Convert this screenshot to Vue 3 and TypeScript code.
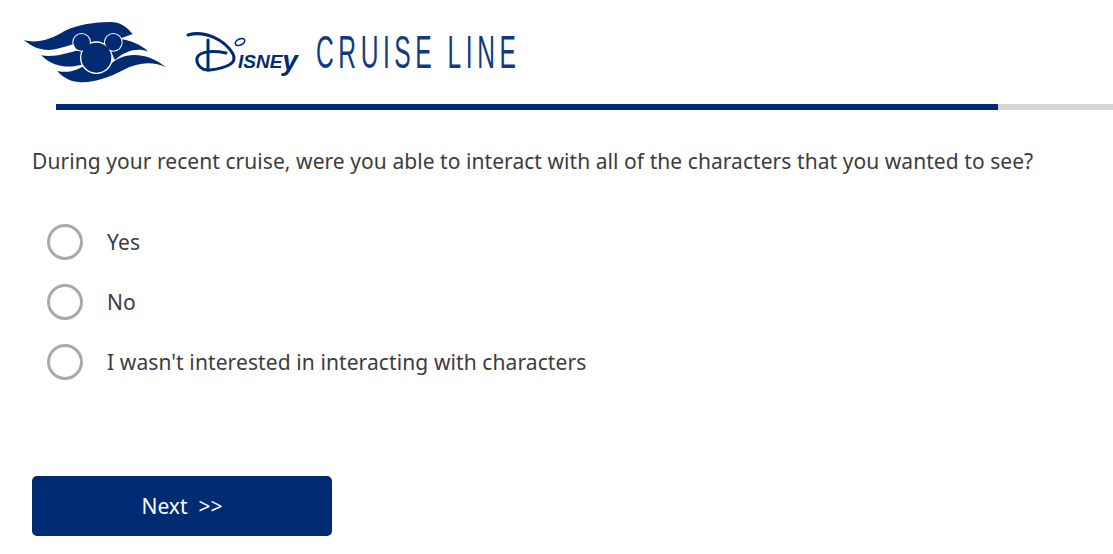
<script setup lang="ts">
const options: string[] = ['Yes', 'No', "I wasn't interested in interacting with characters"]
</script>

<template>
  <div class="page">
    <header class="brand">
      <svg class="flag" viewBox="0 0 540 270" width="180" height="90" role="img" aria-label="Disney Cruise Line flag">
        <path class="ink" d="M42 91 C80 100 120 90 165 62 C205 44 255 36 300 36 C330 36 350 50 368 72 L335 84 L290 100 L200 100 C170 108 140 120 115 120 C85 120 60 106 42 91 Z" />
        <path class="ink" d="M93 136 C130 144 170 130 215 118 L222 162 C190 172 140 180 93 136 Z" />
        <path class="ink" d="M335 88 C362 92 392 104 414 124 C385 114 350 118 315 150 L300 120 Z" />
        <path class="ink" d="M142 183 C175 190 195 182 222 168 L300 165 C325 136 395 112 468 172 C430 153 385 156 340 180 C295 204 245 220 205 216 C175 214 155 198 142 183 Z" />
        <g class="mouse">
          <circle cx="215" cy="97" r="28" />
          <circle cx="310" cy="97" r="28" />
          <circle cx="259" cy="143" r="49" />
        </g>
        <g class="ink">
          <circle cx="215" cy="97" r="25" />
          <circle cx="310" cy="97" r="25" />
          <circle cx="259" cy="143" r="45" />
        </g>
      </svg>
      <svg class="wordmark" viewBox="0 0 350 70" width="350" height="70" role="img" aria-label="Disney Cruise Line">
        <path class="swoosh" d="M8 15 C25 10 45 20 53 34 C58 44 45 48 30 50 C22 51 16 45 17 38 C19 32 30 30 46 33" />
        <path class="swoosh" d="M28 20 L28 50" />
        <ellipse class="dot" cx="60" cy="22" rx="5" ry="3" transform="rotate(-25 60 22)" />
        <text class="disney" x="58" y="48">ISNE<tspan class="disney-y" dy="2">y</tspan></text>
        <text class="line" transform="translate(136 48) scale(.535 1)" x="0" y="0">CRUISE LINE</text>
      </svg>
    </header>

    <div class="progress"><div class="progress-fill"></div></div>

    <main class="survey">
      <p class="question">During your recent cruise, were you able to interact with all of the characters that you wanted to see?</p>
      <ul class="options">
        <li v-for="option in options" :key="option" class="option">
          <span class="radio"></span>
          <span class="label">{{ option }}</span>
        </li>
      </ul>
      <button class="next" type="button">Next&nbsp; &gt;&gt;</button>
    </main>
  </div>
</template>

<style>
html, body { background: #fff; overflow: hidden; }
</style>

<style scoped>
.page {
  width: 1113px;
  height: 554px;
  overflow: hidden;
  font-family: "Noto Sans", "Open Sans", sans-serif;
  color: #3c3c3c;
}
.brand {
  display: flex;
  align-items: flex-start;
  height: 104px;
  padding: 10px 0 0 10px;
  box-sizing: border-box;
}
.flag { flex: none; margin-right: -10px; }
.wordmark { flex: none; margin-top: 10px; }
.ink { fill: #002b73; }
.mouse { fill: #fff; }
.swoosh { fill: none; stroke: #002b73; stroke-width: 3; stroke-linecap: round; }
.dot { fill: none; stroke: #002b73; stroke-width: 1.6; }
.disney {
  font-family: "Liberation Sans", sans-serif;
  font-style: italic;
  font-weight: 700;
  font-size: 19px;
  fill: #002b73;
}
.disney-y { font-size: 28px; }
.line {
  font-family: "Liberation Sans", sans-serif;
  font-size: 46px;
  letter-spacing: 8.5px;
  fill: #123a82;
}
.progress {
  margin-left: 56px;
  height: 6px;
  background: #d6d6d6;
}
.progress-fill { width: 942px; height: 100%; background: #002b73; }
.survey { padding: 0 32px; }
.question {
  margin: 37px 0 0;
  font-size: 21px;
  letter-spacing: .06px;
  line-height: 28px;
  white-space: nowrap;
}
.options {
  list-style: none;
  margin: 49px 0 0;
  padding: 0 0 0 15px;
  display: flex;
  flex-direction: column;
  gap: 24px;
}
.option { display: flex; align-items: center; gap: 24px; height: 36px; }
.radio {
  flex: none;
  width: 36px;
  height: 36px;
  box-sizing: border-box;
  border: 3px solid #aaa;
  border-radius: 50%;
}
.label { font-size: 21px; letter-spacing: .1px; }
.next {
  display: block;
  margin-top: 96px;
  width: 300px;
  height: 60px;
  border: 0;
  border-radius: 5px;
  background: #002b73;
  color: #fff;
  font: inherit;
  font-size: 21px;
  cursor: pointer;
}
</style>
